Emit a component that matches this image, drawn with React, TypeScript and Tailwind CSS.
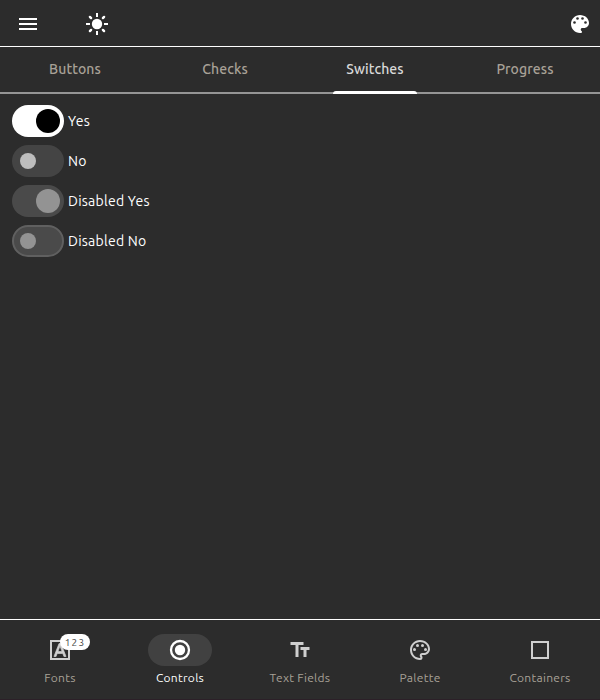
import React from "react";
import { MdMenu, MdOutlinePalette, MdTextFields } from "react-icons/md";

const tabs = ["Buttons", "Checks", "Switches", "Progress"];

function SunIcon() {
  return (
    <svg width="24" height="24" viewBox="0 0 24 24" fill="currentColor">
      <circle cx="12" cy="12" r="5.2" />
      <path
        d="M12 1v4M12 19v4M1 12h4M19 12h4M4.6 4.6l1.8 1.8M17.6 17.6l1.8 1.8M4.6 19.4l1.8-1.8M17.6 6.4l1.8-1.8"
        stroke="currentColor"
        strokeWidth="2"
      />
      <path d="M4.9 4.9l1.2 1.2M17.9 17.9l1.2 1.2M4.9 19.1l1.2-1.2M17.9 6.1l1.2-1.2" stroke="currentColor" strokeWidth="2.4" strokeLinecap="round" />
    </svg>
  );
}

function PaletteIcon() {
  return (
    <svg width="24" height="24" viewBox="0 0 24 24" fill="currentColor" className="ml-auto">
      <path d="M12 3c-4.97 0-9 4.03-9 9s4.03 9 9 9c.83 0 1.5-.67 1.5-1.5 0-.39-.15-.74-.39-1.01-.23-.26-.38-.61-.38-.99 0-.83.67-1.5 1.5-1.5H16c2.76 0 5-2.24 5-5 0-4.42-4.03-8-9-8z" />
      <path d="M12 19h1.7v2H12z" />
      <g fill="#2c2c2c">
        <circle cx="6.5" cy="10.5" r="1.3" />
        <circle cx="9.5" cy="6.5" r="1.3" />
        <circle cx="14.5" cy="6.5" r="1.3" />
        <circle cx="17.5" cy="10.5" r="1.3" />
      </g>
    </svg>
  );
}

function FontIcon() {
  return (
    <svg width="24" height="24" viewBox="0 0 24 24" fill="currentColor">
      <path d="M2 2v20h20V2H2zm18 18H4V4h16v16z" />
      <path
        d="M9.17 15.5h5.64l1.14 3h2.09l-5.11-13h-1.86l-5.11 13h2.09l1.12-3zM12 7.98l2.07 5.52H9.93L12 7.98z"
        stroke="currentColor"
        strokeWidth="0.7"
      />
    </svg>
  );
}

function RadioIcon() {
  return (
    <svg width="24" height="24" viewBox="0 0 24 24" fill="none">
      <circle cx="12" cy="12" r="9" stroke="currentColor" strokeWidth="2.3" />
      <circle cx="12" cy="12" r="5.2" fill="currentColor" />
    </svg>
  );
}

function SquareIcon() {
  return (
    <svg width="24" height="24" viewBox="0 0 24 24" fill="currentColor">
      <path d="M3 3v18h18V3H3zm16 16H5V5h14v14z" />
    </svg>
  );
}

const navItems = [
  { label: "Fonts", icon: <FontIcon />, badge: "123" },
  { label: "Controls", icon: <RadioIcon /> },
  { label: "Text Fields", icon: <MdTextFields size={24} /> },
  { label: "Palette", icon: <MdOutlinePalette size={24} /> },
  { label: "Containers", icon: <SquareIcon /> },
];

const switches = [
  { label: "Yes", box: "justify-end pr-1 bg-white", thumb: "size-6 bg-black" },
  { label: "No", box: "pl-2 bg-[#444444]", thumb: "size-4 bg-[#bdbdbd]" },
  { label: "Disabled Yes", box: "justify-end pr-1 bg-[#4a4a4a]", thumb: "size-6 bg-[#939393]" },
  { label: "Disabled No", box: "pl-1.5 bg-[#4a4a4a] border-2 border-[#606060]", thumb: "size-4 bg-[#939393]" },
];

export default function App() {
  const [tab, setTab] = React.useState("Switches");
  const [page, setPage] = React.useState("Controls");
  return (
    <div className="flex h-[700px] w-[600px] flex-col overflow-hidden border-b border-[#2c2028] bg-[#2c2c2c] font-['Ubuntu','Noto_Sans',sans-serif] text-white">
      <header className="flex h-[47px] items-center border-b border-white pt-px pl-4 pr-2">
        <MdMenu size={24} />
        <span className="ml-[45px]">
          <SunIcon />
        </span>
        <PaletteIcon />
      </header>
      <nav className="grid h-[47px] grid-cols-4 border-b-2 border-[#959595]">
        {tabs.map((t) => (
          <button
            key={t}
            onClick={() => setTab(t)}
            className={`relative flex h-[45px] items-center justify-center pb-0.5 text-sm font-medium tracking-[0.1px] ${tab === t ? "text-[#d8d8d8]" : "text-[#a8a197]"}`}
          >
            {t}
            {tab === t && (
              <span className="absolute -bottom-0.5 left-[33px] h-[3.5px] w-[84px] rounded-t-[3px] bg-white" />
            )}
          </button>
        ))}
      </nav>
      <main className="flex flex-1 flex-col gap-2 px-3 pt-[11px]">
        {switches.map((s) => (
          <div key={s.label} className="flex h-8 items-center gap-1">
            <span className={`flex h-8 w-[52px] items-center rounded-full ${s.box}`}>
              <span className={`rounded-full ${s.thumb}`} />
            </span>
            <span className="text-sm tracking-[0.25px]">{s.label}</span>
          </div>
        ))}
      </main>
      <footer className="grid h-20 grid-cols-5 border-t border-white">
        {navItems.map((n) => (
          <button key={n.label} onClick={() => setPage(n.label)} className={`flex flex-col items-center pt-[14px] ${page === n.label ? "text-white" : "text-[#cfcfcf]"}`}>
            <span className={`relative flex h-8 w-16 items-center justify-center rounded-full ${page === n.label ? "bg-[#414141]" : ""}`}>
              {n.icon}
              {n.badge && (
                <span className="absolute left-8 top-0 flex h-4 w-[30px] items-center justify-center rounded-full bg-white pt-px text-[10px] tracking-[1.2px] text-[#444444]">
                  {n.badge}
                </span>
              )}
            </span>
            <span className={`mt-1 whitespace-nowrap text-xs leading-4 tracking-[0.3px] ${page === n.label ? "text-white" : "text-[#a8a197]"}`}>{n.label}</span>
          </button>
        ))}
      </footer>
    </div>
  );
}
